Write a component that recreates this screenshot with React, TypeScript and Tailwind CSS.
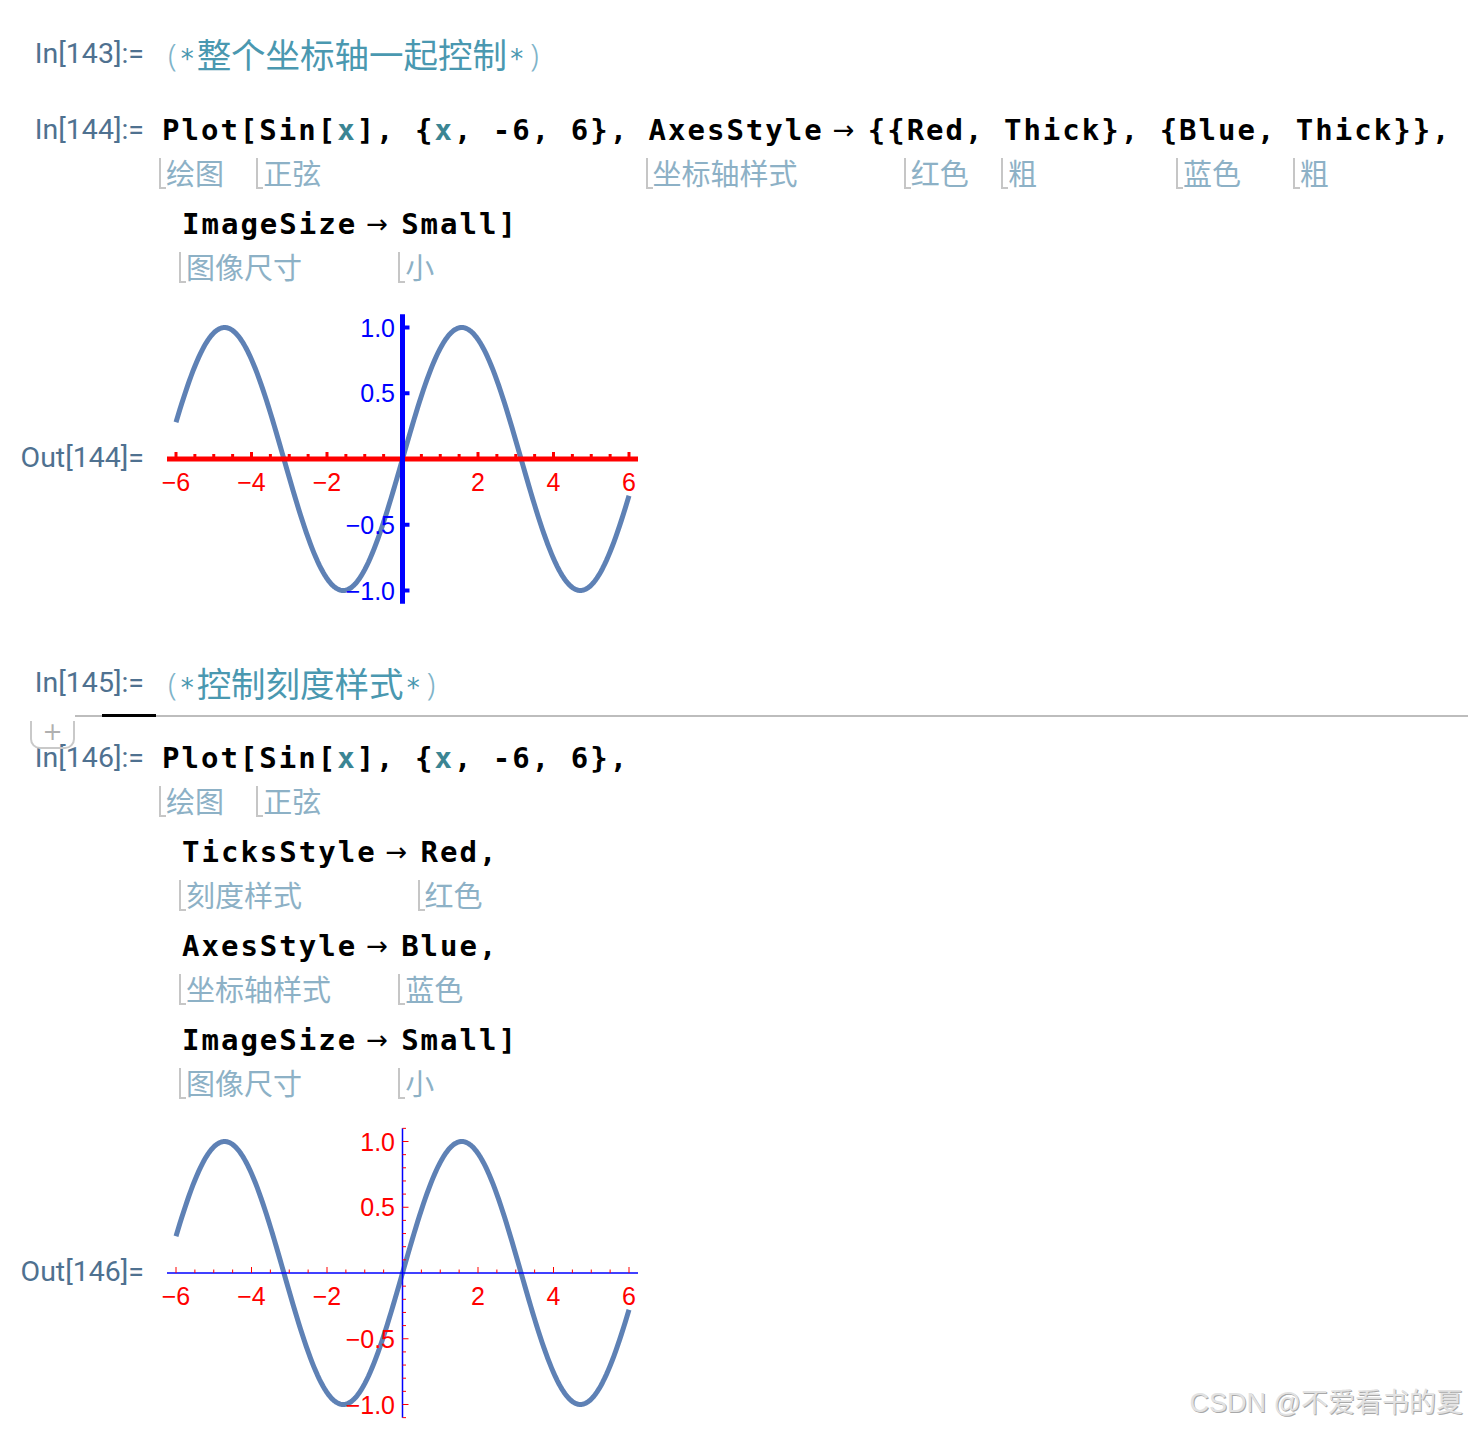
import React from 'react'

// plot geometry (svg-local px)
const X0 = 242.5
const Y0 = 159
const SX = 37.75
const SY = 131.5
const px = (x: number) => X0 + SX * x
const py = (y: number) => Y0 - SY * y

const sinePath = Array.from({ length: 241 }, (_, i) => {
  const x = -6 + i * 0.05
  return `${i ? 'L' : 'M'}${px(x).toFixed(2)},${py(Math.sin(x)).toFixed(2)}`
}).join(' ')

const xSteps = Array.from({ length: 25 }, (_, i) => -6 + i * 0.5).filter((x) => x !== 0)
const ySteps = Array.from({ length: 23 }, (_, i) => Math.round((-1.1 + i * 0.1) * 10) / 10).filter((y) => y !== 0)
const xLabels = [-6, -4, -2, 2, 4, 6]
const yLabels = [1, 0.5, -0.5, -1]
const fmt = (v: number, digits = 0) => (v < 0 ? '\u2212' : '') + Math.abs(v).toFixed(digits)

function SinePlot({ thick }: { thick: boolean }) {
  const xColor = '#ff0000'
  const yColor = thick ? '#0000ff' : '#ff0000'
  return (
    <svg width={490} height={316} viewBox="0 0 490 316" className="block">
      <path d={sinePath} fill="none" stroke="#5e81b5" strokeWidth={5} strokeLinejoin="round" />
      {thick ? (
        <g>
          {xSteps.map((x) => (
            <line key={x} x1={px(x)} x2={px(x)} y1={Y0} y2={Y0 - (x % 2 === 0 ? 7 : 5)} stroke="#ff0000" strokeWidth={3} />
          ))}
          <line x1={7} x2={478} y1={Y0} y2={Y0} stroke="#ff0000" strokeWidth={5} />
          <line x1={X0} x2={X0} y1={py(1.1)} y2={py(-1.1)} stroke="#0000ff" strokeWidth={5} />
          {yLabels.map((v) => (
            <line key={v} x1={X0} x2={X0 + 7} y1={py(v)} y2={py(v)} stroke="#0000ff" strokeWidth={4} />
          ))}
        </g>
      ) : (
        <g>
          <line x1={7} x2={478} y1={Y0} y2={Y0} stroke="#0000ff" strokeWidth={1.5} />
          <line x1={X0} x2={X0} y1={py(1.1)} y2={py(-1.1)} stroke="#0000ff" strokeWidth={1.5} />
          {xSteps.map((x) => (
            <line key={x} x1={px(x)} x2={px(x)} y1={Y0} y2={Y0 - (x % 2 === 0 ? 6 : 3.5)} stroke="#ff0000" strokeWidth={1} />
          ))}
          {ySteps.map((y) => (
            <line key={y} x1={X0} x2={X0 + (Math.abs(y) === 0.5 || Math.abs(y) === 1 ? 6 : 3.5)} y1={py(y)} y2={py(y)} stroke="#ff0000" strokeWidth={1} />
          ))}
        </g>
      )}
      <g fontFamily="Liberation Sans, Arial, sans-serif" fontSize={25}>
        {xLabels.map((x) => (
          <text key={x} x={px(x)} y={Y0 + 32} textAnchor="middle" fill={xColor}>
            {fmt(x)}
          </text>
        ))}
        {yLabels.map((v) => (
          <text key={v} x={X0 - 7.5} y={py(v) + 9} textAnchor="end" fill={yColor}>
            {fmt(v, 1)}
          </text>
        ))}
      </g>
    </svg>
  )
}

function Label({ children, h = 'h-[40px] leading-[40px]' }: { children: React.ReactNode; h?: string }) {
  return (
    <div className={`w-[144px] shrink-0 text-right font-['Roboto',sans-serif] text-[28.5px] text-[#4f7190] ${h}`}>
      {children}
    </div>
  )
}

function Comment({ text }: { text: string }) {
  return (
    <div className="ml-[24px] flex h-[44px] items-center text-[#4a98b0]">
      <span className="font-['Noto_Sans',sans-serif] text-[31px] font-light text-[#7fb4c9]">(</span>
      <span className="ml-[4px] mr-[3px] mt-[10px] font-['DejaVu_Sans',sans-serif] text-[26px] leading-none">*</span>
      <span className="font-['Noto_Sans_CJK_SC',sans-serif] text-[34.5px]">{text}</span>
      <span className="ml-[3px] mr-[7px] mt-[10px] font-['DejaVu_Sans',sans-serif] text-[26px] leading-none">*</span>
      <span className="font-['Noto_Sans',sans-serif] text-[31px] font-light text-[#7fb4c9]">)</span>
    </div>
  )
}

function S({ children, className = '' }: { children: React.ReactNode; className?: string }) {
  return <span className={`h-[40px] leading-[40px] ${className}`}>{children}</span>
}

const X = () => <S className="text-[#3b8593]">x</S>

function Tok({ t, note }: { t: string; note: string }) {
  return (
    <span className="flex flex-col">
      <span className="h-[40px] leading-[40px]">{t}</span>
      <span className="-ml-[3px] flex h-[44px] w-0 items-center whitespace-nowrap">
        <span className="mt-[3px] h-[31px] w-[7px] shrink-0 border-b-2 border-l-2 border-[#c6c6c6]" />
        <span className="shrink-0 font-['Noto_Sans_CJK_SC',sans-serif] text-[29px] font-normal leading-[44px] tracking-normal text-[#8db1c6]">
          {note}
        </span>
      </span>
    </span>
  )
}

const Arrow = () => (
  <span className="h-[40px] w-[44px] pl-[9px] font-['DejaVu_Sans',sans-serif] text-[26px] font-normal leading-[40px] tracking-normal">
    →
  </span>
)

function Line({ children, indent = false, last = false }: { children: React.ReactNode; indent?: boolean; last?: boolean }) {
  return (
    <div className={`flex h-[84px] items-start whitespace-pre ${indent ? 'pl-[20px]' : ''} ${last ? '' : 'mb-[10px]'}`}>
      {children}
    </div>
  )
}

const code = "ml-[18px] font-['DejaVu_Sans_Mono',monospace] text-[29px] font-bold tracking-[2px] text-black"

export default function App() {
  return (
    <div className="relative h-[1433px] w-[1468px] overflow-hidden bg-white pt-[32px]">
      {/* In[143] */}
      <div className="flex items-center">
        <Label h="h-[44px] leading-[44px]">In[143]:=</Label>
        <Comment text="整个坐标轴一起控制" />
      </div>

      {/* In[144] */}
      <div className="mt-[34px] flex items-start">
        <Label>In[144]:=</Label>
        <div className={code}>
          <Line>
            <Tok t="Plot" note="绘图" />
            <S>[</S>
            <Tok t="Sin" note="正弦" />
            <S>[</S>
            <X />
            <S>{'], {'}</S>
            <X />
            <S>{', -6, 6}, '}</S>
            <Tok t="AxesStyle" note="坐标轴样式" />
            <Arrow />
            <S>{'{{'}</S>
            <Tok t="Red" note="红色" />
            <S>{', '}</S>
            <Tok t="Thick" note="粗" />
            <S>{'}, {'}</S>
            <Tok t="Blue" note="蓝色" />
            <S>{', '}</S>
            <Tok t="Thick" note="粗" />
            <S>{'}},'}</S>
          </Line>
          <Line indent last>
            <Tok t="ImageSize" note="图像尺寸" />
            <Arrow />
            <Tok t="Small" note="小" />
            <S>]</S>
          </Line>
        </div>
      </div>

      {/* Out[144] */}
      <div className="mt-[12px] flex items-center">
        <Label>Out[144]=</Label>
        <div className="ml-[16px]">
          <SinePlot thick />
        </div>
      </div>

      {/* In[145] */}
      <div className="mt-[45px] flex items-center">
        <Label h="h-[44px] leading-[44px]">In[145]:=</Label>
        <Comment text="控制刻度样式" />
      </div>

      {/* cell insertion bar */}
      <div className="relative mt-[9px] flex h-[3px] items-center pl-[75px]">
        <div className="h-[2px] w-[27px] bg-[#bdbdbd]" />
        <div className="h-[3px] w-[54px] bg-black" />
        <div className="h-[2px] flex-1 bg-[#bdbdbd]" />
        <div className="absolute left-[30px] top-[7px] flex h-[28px] w-[45px] items-start justify-center rounded-b-[10px] border-x-2 border-b-2 border-[#c9c9c9] font-['DejaVu_Sans',sans-serif] text-[24px] leading-[22px] text-[#b0b0b0]">
          +
        </div>
      </div>

      {/* In[146] */}
      <div className="mt-[21px] flex items-start">
        <Label>In[146]:=</Label>
        <div className={code}>
          <Line>
            <Tok t="Plot" note="绘图" />
            <S>[</S>
            <Tok t="Sin" note="正弦" />
            <S>[</S>
            <X />
            <S>{'], {'}</S>
            <X />
            <S>{', -6, 6},'}</S>
          </Line>
          <Line indent>
            <Tok t="TicksStyle" note="刻度样式" />
            <Arrow />
            <Tok t="Red" note="红色" />
            <S>,</S>
          </Line>
          <Line indent>
            <Tok t="AxesStyle" note="坐标轴样式" />
            <Arrow />
            <Tok t="Blue" note="蓝色" />
            <S>,</S>
          </Line>
          <Line indent last>
            <Tok t="ImageSize" note="图像尺寸" />
            <Arrow />
            <Tok t="Small" note="小" />
            <S>]</S>
          </Line>
        </div>
      </div>

      {/* Out[146] */}
      <div className="mt-[10px] flex items-center">
        <Label>Out[146]=</Label>
        <div className="ml-[16px]">
          <SinePlot thick={false} />
        </div>
      </div>

      {/* watermark */}
      <div className="absolute bottom-[10px] right-[5px] font-['Liberation_Sans','Noto_Sans_CJK_SC',sans-serif] text-[27px] text-[#e2e2e2] [text-shadow:1px_1px_0_#a8a8a8]">
        CSDN @不爱看书的夏
      </div>
    </div>
  )
}
